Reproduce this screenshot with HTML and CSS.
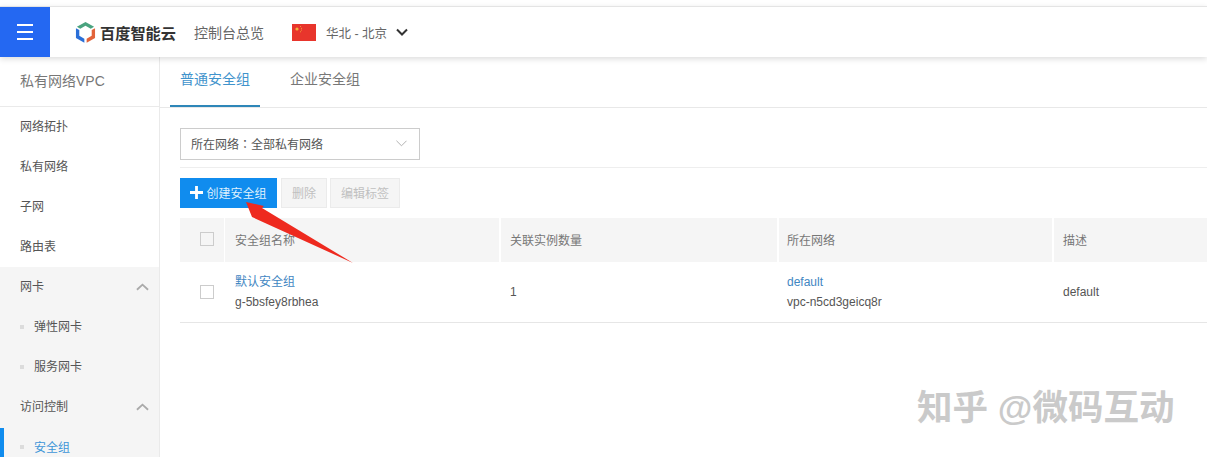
FILE: index.html
```html
<!DOCTYPE html>
<html lang="zh">
<head>
<meta charset="utf-8">
<title>普通安全组</title>
<link rel="stylesheet" href="styles.css">
</head>
<body>
<div class="page">
  <header class="topbar">
    <button class="menu-btn" aria-label="菜单"><span></span><span></span><span></span></button>
    <svg class="logo-mark" viewBox="0 0 22 24" width="21" height="23">
      <path d="M11 1 L20 6 L16.500 8 L11 5 L5.500 8 L2 6 Z" fill="#4aa37f"/>
      <path d="M1 7.500 L4.500 9.500 V15.500 L9.800 18.500 V22.800 L1 17.800 Z" fill="#2a6fd8"/>
      <path d="M21 7.500 L17.500 9.500 V15.500 L12.200 18.500 V22.800 L21 17.800 Z" fill="#e2633a"/>
    </svg>
    <span class="logo-text">百度智能云</span>
    <span class="console">控制台总览</span>
    <svg class="flag" viewBox="0 0 24 17" width="24" height="17">
      <rect width="24" height="17" fill="#e8352c"/>
      <circle cx="5" cy="5" r="1.600" fill="#f2b23c"/>
      <circle cx="8.500" cy="2.500" r=".5" fill="#f2b23c"/>
      <circle cx="9.500" cy="4.200" r=".5" fill="#f2b23c"/>
      <circle cx="9.500" cy="6" r=".5" fill="#f2b23c"/>
      <circle cx="8.500" cy="7.700" r=".5" fill="#f2b23c"/>
    </svg>
    <span class="region">华北 - 北京</span>
    <svg class="region-caret" viewBox="0 0 12 8" width="12" height="8"><path d="M1 1.500 L6 6.500 L11 1.500" fill="none" stroke="#333" stroke-width="2"/></svg>
  </header>
  <div class="body">
    <aside class="side">
      <div class="side-title">私有网络VPC</div>
      <div class="side-item">网络拓扑</div>
      <div class="side-item">私有网络</div>
      <div class="side-item">子网</div>
      <div class="side-item">路由表</div>
      <div class="side-group">
        <div class="side-item">网卡<svg class="up" viewBox="0 0 14 8" width="13" height="8"><path d="M1 7 L7 1.500 L13 7" fill="none" stroke="#aaa" stroke-width="2"/></svg></div>
        <div class="side-item sub"><i></i>弹性网卡</div>
        <div class="side-item sub"><i></i>服务网卡</div>
        <div class="side-item">访问控制<svg class="up" viewBox="0 0 14 8" width="13" height="8"><path d="M1 7 L7 1.500 L13 7" fill="none" stroke="#aaa" stroke-width="2"/></svg></div>
        <div class="side-item sub active"><i></i>安全组</div>
      </div>
    </aside>
    <main class="main">
      <nav class="tabs">
        <a class="tab tab-on">普通安全组</a>
        <a class="tab">企业安全组</a>
      </nav>
      <div class="filter">
        <div class="select"><span>所在网络<span class="colon" lang="zh-Hant">：</span>全部私有网络</span>
          <svg viewBox="0 0 12 7" width="11" height="7"><path d="M.5 .5 L6 6 L11.500 .5" fill="none" stroke="#aaa" stroke-width="1"/></svg>
        </div>
      </div>
      <div class="actions">
        <button class="btn-primary"><svg viewBox="0 0 12 12" width="13" height="13"><path d="M6 0 V12 M0 6 H12" stroke="#fff" stroke-width="2.600"/></svg>创建安全组</button>
        <button class="btn-off btn-del">删除</button>
        <button class="btn-off">编辑标签</button>
      </div>
      <div class="table">
        <div class="row head">
          <div class="cell c0"><span class="check"></span></div>
          <div class="cell c1">安全组名称</div>
          <div class="cell c2">关联实例数量</div>
          <div class="cell c3">所在网络</div>
          <div class="cell c4">描述</div>
        </div>
        <div class="row data">
          <div class="cell c0"><span class="check"></span></div>
          <div class="cell c1"><a>默认安全组</a><span>g-5bsfey8rbhea</span></div>
          <div class="cell c2">1</div>
          <div class="cell c3"><a>default</a><span>vpc-n5cd3geicq8r</span></div>
          <div class="cell c4">default</div>
        </div>
      </div>
    </main>
  </div>
  <svg class="arrow" viewBox="0 0 120 70" width="120" height="70">
    <path d="M2 4 L20 8 L18 10 L109 65 L8 19 Z" fill="#ee2a1f"/>
  </svg>
  <div class="watermark">知乎 @微码互动</div>
</div>
</body>
</html>
```
FILE: styles.css
```css
* { box-sizing: border-box; }
html, body { margin: 0; height: 100%; }
body { font-family: "Liberation Sans", "Noto Sans CJK SC", sans-serif; font-size: 12px; color: #555; background: #fff; overflow: hidden; }
.page { position: relative; height: 457px; overflow: hidden; padding-top: 6px; }

.topbar { position: relative; z-index: 1; display: flex; align-items: center; height: 51px; border-top: 1px solid #e4e4e4; background: #fff; box-shadow: 0 2px 6px rgba(0,0,0,.14); }
.menu-btn { display: flex; flex-direction: column; justify-content: center; gap: 5px; width: 50px; height: 50px; padding: 0 17px; border: 0; background: #2468f2; }
.menu-btn span { display: block; height: 2px; background: #fff; }
.logo-mark { margin-left: 25px; }
.logo-text { margin-left: 4px; font-size: 15.200px; font-weight: 700; color: #333; width: 76px; white-space: nowrap; }
.console { margin-left: 18px; font-size: 14px; color: #666; }
.flag { margin-left: 28px; }
.region { margin-left: 10px; font-size: 12.500px; color: #666; }
.region-caret { margin-left: 9px; }

.body { display: flex; height: 400px; }
.side { flex: none; width: 160px; border-right: 1px solid #eaeaea; }
.side-title { height: 50px; padding: 0 0 0 20px; line-height: 49px; font-size: 14px; color: #777; border-bottom: 1px solid #eaeaea; }
.side-item { position: relative; display: flex; align-items: center; justify-content: space-between; height: 40px; padding: 0 10px 3px 20px; color: #555; }
.side-group { background: #f5f5f5; height: 190px; }
.up { position: relative; top: 1px; }
.sub { justify-content: flex-start; padding-left: 34px; }
.sub i { position: absolute; left: 20px; top: 18px; width: 4px; height: 4px; background: #dcdcdc; }
.active { color: #3f96d8; padding-bottom: 1px; }
.active::before { content: ""; position: absolute; left: 0; top: 1px; width: 4px; height: 39px; background: #108cee; }

.main { flex: 1; min-width: 0; }
.tabs { display: flex; height: 51px; padding-left: 10px; border-bottom: 1px solid #e8e8e8; }
.tab { width: 90px; height: 50px; margin-right: 20px; line-height: 45px; text-align: center; font-size: 14px; color: #777; }
.tab-on { color: #3f93cc; border-bottom: 2px solid #2e86b8; }
.filter { margin: 20px 0 0 20px; height: 40px; border-bottom: 1px solid #eee; }
.select { display: flex; align-items: center; justify-content: space-between; width: 240px; height: 32px; padding: 0 12px 2px 10px; border: 1px solid #ccc; color: #555; }
.colon { font-family: "Noto Sans CJK TC", sans-serif; }
.actions { display: flex; gap: 3px; margin: 10px 0 10px 20px; height: 30px; }
.actions button { height: 30px; padding: 0 0 2px; font-family: inherit; font-size: 12px; }
.btn-primary { display: flex; align-items: center; justify-content: center; gap: 3px; width: 97px; border: 0; background: #108cee; color: #dff0fd; }
.actions .btn-del { width: 46px; margin-left: 1px; }
.btn-off { width: 70px; border: 1px solid #ebebeb; background: #f5f5f5; color: #c0c0c0; }

.table { margin-left: 20px; }
.row { display: grid; grid-template-columns: 45px 276px 278px 275px 1fr; }
.head { height: 44px; }
.head .cell { padding-bottom: 2px; background: #f5f5f5; border-right: 2px solid #fff; color: #777; }
.head .c0 { border-right-width: 1px; }
.head .c4 { border-right: 0; }
.data { height: 61px; border-bottom: 1px solid #e6e6e6; }
.cell { display: flex; flex-direction: column; justify-content: center; padding-left: 9px; }
.c0 { align-items: flex-start; padding-left: 20px; }
.c1 { padding-left: 10px; }
.c3 { padding-left: 8px; }
.cell a { color: #3f86c2; line-height: 20px; }
.cell span { line-height: 20px; }
.cell span.check { width: 14px; height: 14px; border: 1px solid #ccc; background: #fff; }
.head .cell span.check { background: #f5f5f5; }

.arrow { position: absolute; left: 244px; top: 198px; }
.watermark { position: absolute; left: 917px; top: 386px; font-size: 35.500px; line-height: 44px; font-weight: 700; color: #cacaca; white-space: nowrap; }
```
